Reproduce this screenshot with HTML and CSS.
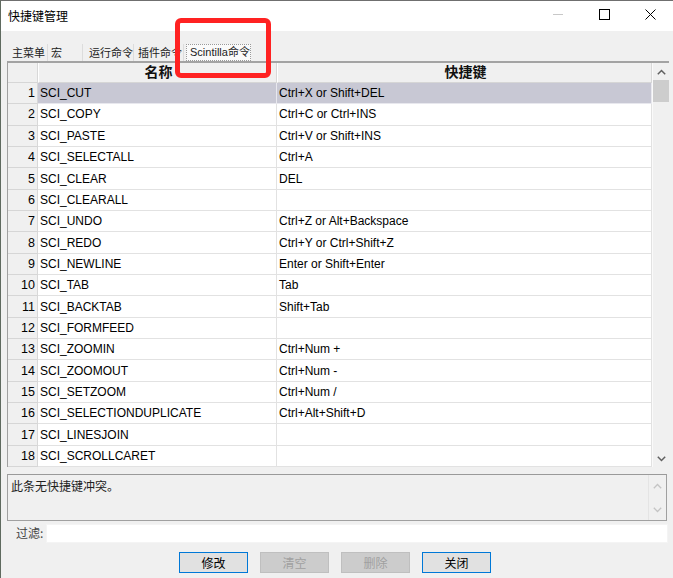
FILE: index.html
```html
<!DOCTYPE html>
<html lang="zh">
<head>
<meta charset="utf-8">
<title>快捷键管理</title>
<link rel="stylesheet" href="styles.css">
</head>
<body>
<div class="window">
  <div class="titlebar">
    <span class="title">快捷键管理</span>
    <div class="controls">
      <span class="ctl"><svg width="10" height="10" viewBox="0 0 10 10"><line x1="0" y1="5.5" x2="10" y2="5.5" stroke="#c8c8c8" stroke-width="1"/></svg></span>
      <span class="ctl"><svg width="11" height="11" viewBox="0 0 11 11"><rect x="0.5" y="0.5" width="10" height="10" fill="none" stroke="#000" stroke-width="1"/></svg></span>
      <span class="ctl"><svg width="11" height="11" viewBox="0 0 11 11"><path d="M0.5 0.5 L10.5 10.5 M10.5 0.5 L0.5 10.5" stroke="#000" stroke-width="1"/></svg></span>
    </div>
  </div>

  <div class="tabs">
    <span class="tab t1">主菜单</span>
    <span class="tab t2">宏</span>
    <span class="tab t3">运行命令</span>
    <span class="tab t4">插件命令</span>
    <span class="tab sel">Scintilla命令</span>
  </div>

  <div class="grid">
    <div class="table">
      <div class="row head">
        <div class="c num"></div>
        <div class="c name">名称</div>
        <div class="c key">快捷键</div>
      </div>
      <div class="row selected"><div class="c num">1</div><div class="c name">SCI_CUT</div><div class="c key">Ctrl+X or Shift+DEL</div></div>
      <div class="row"><div class="c num">2</div><div class="c name">SCI_COPY</div><div class="c key">Ctrl+C or Ctrl+INS</div></div>
      <div class="row"><div class="c num">3</div><div class="c name">SCI_PASTE</div><div class="c key">Ctrl+V or Shift+INS</div></div>
      <div class="row"><div class="c num">4</div><div class="c name">SCI_SELECTALL</div><div class="c key">Ctrl+A</div></div>
      <div class="row"><div class="c num">5</div><div class="c name">SCI_CLEAR</div><div class="c key">DEL</div></div>
      <div class="row"><div class="c num">6</div><div class="c name">SCI_CLEARALL</div><div class="c key"></div></div>
      <div class="row"><div class="c num">7</div><div class="c name">SCI_UNDO</div><div class="c key">Ctrl+Z or Alt+Backspace</div></div>
      <div class="row"><div class="c num">8</div><div class="c name">SCI_REDO</div><div class="c key">Ctrl+Y or Ctrl+Shift+Z</div></div>
      <div class="row"><div class="c num">9</div><div class="c name">SCI_NEWLINE</div><div class="c key">Enter or Shift+Enter</div></div>
      <div class="row"><div class="c num">10</div><div class="c name">SCI_TAB</div><div class="c key">Tab</div></div>
      <div class="row"><div class="c num">11</div><div class="c name">SCI_BACKTAB</div><div class="c key">Shift+Tab</div></div>
      <div class="row"><div class="c num">12</div><div class="c name">SCI_FORMFEED</div><div class="c key"></div></div>
      <div class="row"><div class="c num">13</div><div class="c name">SCI_ZOOMIN</div><div class="c key">Ctrl+Num +</div></div>
      <div class="row"><div class="c num">14</div><div class="c name">SCI_ZOOMOUT</div><div class="c key">Ctrl+Num -</div></div>
      <div class="row"><div class="c num">15</div><div class="c name">SCI_SETZOOM</div><div class="c key">Ctrl+Num /</div></div>
      <div class="row"><div class="c num">16</div><div class="c name">SCI_SELECTIONDUPLICATE</div><div class="c key">Ctrl+Alt+Shift+D</div></div>
      <div class="row"><div class="c num">17</div><div class="c name">SCI_LINESJOIN</div><div class="c key"></div></div>
      <div class="row"><div class="c num">18</div><div class="c name">SCI_SCROLLCARET</div><div class="c key"></div></div>
    </div>
    <div class="vscroll">
      <span class="arrow"><svg width="9" height="6" viewBox="0 0 9 6"><path d="M0.8 5.2 L4.5 1.5 L8.2 5.2" fill="none" stroke="#606060" stroke-width="1.5"/></svg></span>
      <span class="thumb"></span>
      <span class="track"></span>
      <span class="arrow"><svg width="9" height="6" viewBox="0 0 9 6"><path d="M0.8 0.8 L4.5 4.5 L8.2 0.8" fill="none" stroke="#606060" stroke-width="1.5"/></svg></span>
    </div>
  </div>

  <div class="info">
    <div class="info-text">此条无快捷键冲突。</div>
    <div class="info-scroll">
      <span class="arrow"><svg width="9" height="6" viewBox="0 0 9 6"><path d="M0.8 5.2 L4.5 1.5 L8.2 5.2" fill="none" stroke="#c4c4c4" stroke-width="1.3"/></svg></span>
      <span class="arrow"><svg width="9" height="6" viewBox="0 0 9 6"><path d="M0.8 0.8 L4.5 4.5 L8.2 0.8" fill="none" stroke="#c4c4c4" stroke-width="1.3"/></svg></span>
    </div>
  </div>

  <div class="filter">
    <span class="flabel">过滤:</span>
    <span class="finput"></span>
  </div>

  <div class="buttons">
    <span class="btn focus">修改</span>
    <span class="btn disabled">清空</span>
    <span class="btn disabled">删除</span>
    <span class="btn focus">关闭</span>
  </div>

  <div class="annot"></div>
</div>
</body>
</html>
```

FILE: styles.css
```css
* { box-sizing: border-box; }
html, body { margin: 0; padding: 0; }
body {
  background: #f0f0f0;
  font-family: "Liberation Sans", Arial, "Noto Sans CJK SC", sans-serif;
  font-size: 12px;
  color: #000;
}
.window {
  position: relative;
  width: 673px;
  height: 578px;
  border-top: 1px solid #6f6f6f;
  border-left: 1px solid #5f6a5f;
  background: #f0f0f0;
  overflow: hidden;
  display: flex;
  flex-direction: column;
}
.titlebar {
  height: 30px;
  background: #fff;
  display: flex;
  align-items: center;
  justify-content: space-between;
  padding-left: 7px;
}
.title {
  font-family: "Noto Sans CJK SC", sans-serif;
  font-size: 12px;
  color: #000;
  margin-top: -2px;
}
.controls { display: flex; height: 100%; }
.ctl {
  width: 46px;
  height: 100%;
  display: flex;
  align-items: center;
  justify-content: center;
  margin-top: -2px;
}
.tabs {
  display: flex;
  align-items: stretch;
  height: 17px;
  margin-top: 13px;
  padding-left: 9px;
  font-family: "Noto Sans CJK SC", sans-serif;
  font-size: 11px;
  color: #222;
}
.tab {
  display: flex;
  align-items: center;
  justify-content: flex-start;
  padding-left: 2px;
  border-right: 1px solid #dcdcdc;
  line-height: 1;
  white-space: nowrap;
}
.t1 { width: 38px; }
.t2 { width: 35px; padding-left: 3px; }
.t3 { width: 49px; padding-left: 4px; margin-left: 2px; }
.t4 { width: 50px; padding-left: 4px; }
.tab.sel {
  margin-left: 2px;
  width: 65px;
  background: #fafafa;
  border: 1px dotted #9a9a9a;
  padding-left: 3px;
  font-family: "Liberation Sans", Arial, "Noto Sans CJK SC", sans-serif;
}
.grid {
  display: flex;
  margin-left: 6px;
  width: 662px;
  height: 406px;
  border-top: 2px solid #a3a3a3;
  border-left: 1px solid #a0a0a0;
  background: #fff;
}
.table { flex: 1; display: flex; flex-direction: column; }
.row {
  display: grid;
  grid-template-columns: 30px 239px 1fr;
  height: 21.4px;
}
.row.head { height: 20px; }
.c {
  display: flex;
  align-items: center;
  white-space: nowrap;
  overflow: hidden;
  border-bottom: 1px solid #e2e2e2;
  border-right: 1px solid #e2e2e2;
  padding-left: 2px;
}
.c.num {
  background: #f0f0f0;
  justify-content: flex-end;
  padding-right: 2px;
  border-bottom: 1px solid #d6d6d6;
  border-right: 1px solid #d8d8d8;
  font-size: 12.5px;
}
.head .c {
  background: #f0f0f0;
  justify-content: center;
  overflow: visible;
  font-family: "Noto Sans CJK SC", sans-serif;
  font-weight: bold;
  font-size: 14px;
  line-height: 14px;
  padding-bottom: 2px;
  color: #111;
  border-bottom: 1px solid #d6d6d6;
  border-right: 1px solid #d8d8d8;
  border-left: 1px solid #fff;
}
.head .c.num { border-left: 0; }
.selected .name, .selected .key {
  background: #c8c8d4;
  border-bottom-color: #e8e8ee;
  border-right-color: #e8e8ee;
}
.vscroll {
  width: 17px;
  background: #f0f0f0;
  display: flex;
  flex-direction: column;
  align-items: center;
  border-left: 1px solid #fafafa;
}
.vscroll .arrow {
  height: 17px;
  width: 100%;
  display: flex;
  align-items: center;
  justify-content: center;
}
.vscroll .thumb {
  width: 16px;
  height: 22px;
  background: #cdcdcd;
}
.vscroll .track { flex: 1; }
.info {
  margin: 7px 0 0 6px;
  width: 660px;
  height: 47px;
  border: 1px solid #a0a0a0;
  border-top-color: #9a9a9a;
  display: flex;
  background: #f0f0f0;
}
.info-text {
  flex: 1;
  padding: 2px 0 0 3px;
  font-family: "Noto Sans CJK SC", sans-serif;
  font-size: 12px;
  color: #222;
}
.info-scroll {
  width: 18px;
  border-left: 1px solid #e4e4e4;
  display: flex;
  flex-direction: column;
  justify-content: space-between;
  padding: 4px 0 3px;
}
.info-scroll .arrow {
  height: 14px;
  display: flex;
  align-items: center;
  justify-content: center;
}
.filter {
  display: flex;
  align-items: center;
  margin-top: 2px;
  height: 20px;
}
.flabel {
  width: 45px;
  padding-left: 15px;
  margin-top: -2px;
  font-family: "Noto Sans CJK SC", sans-serif;
  font-size: 12px;
  color: #444;
}
.finput {
  width: 622px;
  height: 19px;
  background: #fff;
  border: 1px solid #f4f4f4;
}
.buttons {
  display: flex;
  justify-content: center;
  gap: 12px;
  margin-top: 9px;
  padding-right: 4px;
}
.btn {
  width: 69px;
  height: 21px;
  display: flex;
  align-items: center;
  justify-content: center;
  background: #e1e1e1;
  border: 1px solid #adadad;
  font-family: "Noto Sans CJK SC", sans-serif;
  font-size: 12px;
  color: #000;
}
.btn.focus { border: 1px solid #0078d7; }
.btn.disabled {
  background: #cccccc;
  border-color: #bfbfbf;
  color: #a0a0a0;
}
.annot {
  position: absolute;
  left: 174px;
  top: 17px;
  width: 96px;
  height: 60px;
  border: 5px solid #ff2222;
  border-radius: 6px;
}
```
